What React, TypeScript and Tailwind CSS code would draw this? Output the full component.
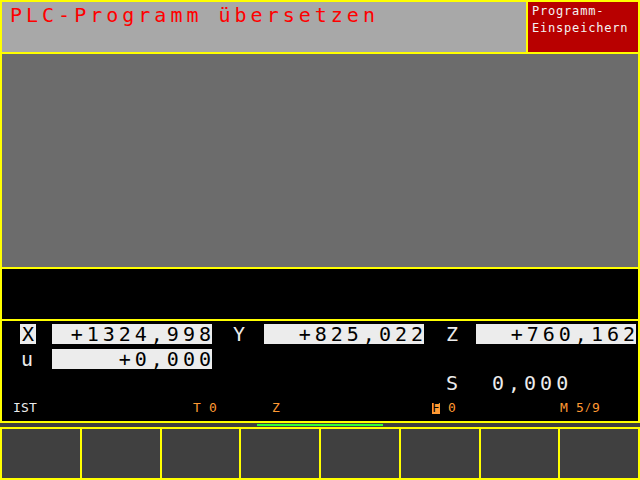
import React from "react";

const mono = "font-['DejaVu_Sans_Mono',monospace]";

function Softkeys() {
  return (
    <div className="mx-[2px] grid h-[49px] grid-cols-8 gap-[2px]">
      {Array.from({ length: 8 }).map((_, i) => (
        <div key={i} className="bg-[#404040]" />
      ))}
    </div>
  );
}

export default function App() {
  return (
    <div className={`flex h-[480px] w-[640px] flex-col bg-[#ffff00] pt-[2px] pb-[2px] ${mono}`}>
      {/* Header */}
      <div className="mx-[2px] flex h-[50px] gap-[2px]">
        <div className="flex-1 bg-[#a8a8a8] pl-[8px] pt-[3px]">
          <span className="text-[20px] leading-[20px] tracking-[4px] text-[#ff0000]">
            PLC-Programm übersetzen
          </span>
        </div>
        <div className="w-[110px] bg-[#b80000] pl-[4px] pt-[1px] text-[12px] leading-[17px] tracking-[0.8px] text-[#f4f4f4]">
          <div>Programm-</div>
          <div>Einspeichern</div>
        </div>
      </div>

      {/* Graphic area */}
      <div className="mx-[2px] mt-[2px] h-[213px] bg-[#6c6c6c]" />

      {/* Black message area */}
      <div className="mx-[2px] mt-[2px] h-[50px] bg-black" />

      {/* Coordinates */}
      <div className="mx-[2px] mt-[2px] flex h-[100px] flex-col bg-black text-[20px] leading-[20px] text-[#ececec]">
        <div className="mt-[3px] flex h-[20px]">
          <div className="ml-[18px] w-[16px] bg-[#ececec] pl-[2px] text-black">X</div>
          <div className="ml-[16px] flex w-[160px] justify-end bg-[#ececec] text-black">
            <span className="mr-[-3px] tracking-[4px]">+1324,998</span>
          </div>
          <div className="w-[52px] pl-[21px]">Y</div>
          <div className="flex w-[160px] justify-end bg-[#ececec] text-black">
            <span className="mr-[-3px] tracking-[4px]">+825,022</span>
          </div>
          <div className="w-[52px] pl-[22px]">Z</div>
          <div className="flex w-[160px] justify-end bg-[#ececec] text-black">
            <span className="mr-[-3px] tracking-[4px]">+760,162</span>
          </div>
        </div>
        <div className="mt-[5px] flex h-[20px]">
          <div className="ml-[19px] w-[31px]">u</div>
          <div className="flex w-[160px] justify-end bg-[#ececec] text-black">
            <span className="mr-[-3px] tracking-[4px]">+0,000</span>
          </div>
        </div>
        <div className="mt-[4px] flex h-[20px]">
          <div className="ml-[444px] w-[46px]">S</div>
          <div className="tracking-[4px]">0,000</div>
        </div>
        <div className="mt-[8px] flex h-[14px] text-[13px] leading-[14px] tracking-[0.2px]">
          <div className="ml-[11px] w-[180px] text-[#ececec]">IST</div>
          <div className="w-[79px] text-[#ff9933]">T 0</div>
          <div className="w-[160px] text-[#ff9933]">Z</div>
          <div className="flex w-[128px] items-start text-[#ff9933]">
            <span className="mt-[2px] inline-block h-[11px] w-[8px] bg-[#ff9933] text-center text-[12px] leading-[11px] text-black">
              F
            </span>
            <span className="ml-[8px]">0</span>
          </div>
          <div className="flex text-[#ff9933]">
            <span>M 5</span>
            <span className="inline-block w-[8px] text-center text-[10px]">/</span>
            <span>9</span>
          </div>
        </div>
      </div>

      {/* Status strip */}
      <div className="mt-[2px] h-[4px] bg-[#404040] pt-[1px]">
        <div className="ml-[257px] h-[2px] w-[126px] bg-[#33ff33]" />
      </div>

      {/* Softkeys */}
      <div className="mt-[2px]">
        <Softkeys />
      </div>
    </div>
  );
}
